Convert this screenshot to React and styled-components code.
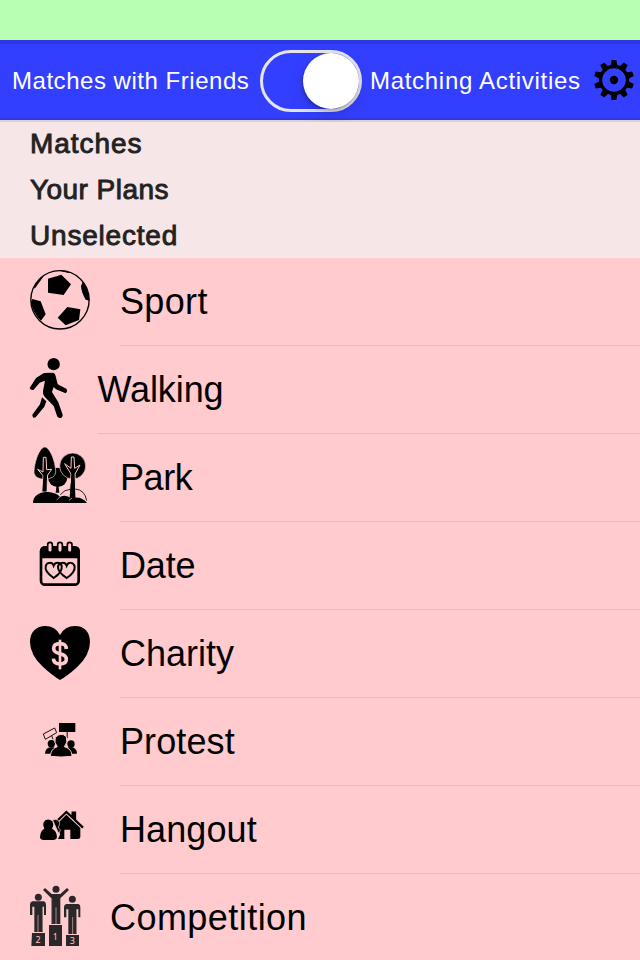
import React, { useState } from "react";
import styled, { createGlobalStyle } from "styled-components";

const GlobalStyle = createGlobalStyle`
  * { box-sizing: border-box; }
  body { margin: 0; background: #ffcbce; }
`;

const Screen = styled.main`
  width: 640px;
  height: 960px;
  overflow: hidden;
  display: flex;
  flex-direction: column;
  background: #ffcbce;
  color: #000;
  font-family: "Liberation Sans", Arial, sans-serif;
`;

const StatusBar = styled.div`
  flex: none;
  height: 40px;
  background: #b9ffb3;
`;

const Toolbar = styled.header`
  flex: none;
  height: 82px;
  display: flex;
  align-items: flex-start;
  padding: 6px 6px 0 12px;
  background: #333fff;
  border-top: 4px solid #2d38e4;
  border-bottom: 2px solid #dccfd1;
  box-shadow: inset 0 -2px #2d38e4;
`;

const ToolbarLabel = styled.span`
  flex: none;
  width: ${(p) => p.$width}px;
  line-height: 61px;
  font-size: 24px;
  letter-spacing: ${(p) => p.$spacing}px;
  color: #fff;
  white-space: nowrap;
`;

const Toggle = styled.button`
  flex: none;
  width: 102px;
  height: 62px;
  margin-right: 8px;
  padding: 0;
  display: flex;
  justify-content: ${(p) => (p.$on ? "flex-end" : "flex-start")};
  align-items: center;
  border: 3px solid #e5e5e8;
  border-radius: 31px;
  background: transparent;
`;

const Knob = styled.span`
  width: 56px;
  height: 56px;
  border-radius: 50%;
  background: #fff;
  box-shadow: -1px 2px 3px rgba(0, 0, 0, 0.2), 0 6px 16px rgba(0, 0, 0, 0.14);
`;

const SettingsButton = styled.button`
  flex: none;
  width: 40px;
  height: 40px;
  margin: 10px 0 0 auto;
  padding: 0;
  border: 0;
  background: none;
  svg { display: block; }
`;

const Sections = styled.section`
  flex: none;
  height: 136px;
  padding-left: 30px;
  background: #f6e6e7;
`;

const SectionTitle = styled.h2`
  margin: 0;
  height: 46px;
  line-height: 44px;
  font-size: 28px;
  font-weight: 400;
  letter-spacing: ${(p) => p.$spacing}px;
  color: #222;
  -webkit-text-stroke: 0.9px #222;
`;

const ActivityList = styled.ul`
  list-style: none;
  margin: 0;
  padding: 0;
`;

const ActivityRow = styled.li`
  height: 88px;
  display: flex;
  gap: 30px;
  padding-left: 30px;
`;

const ActivityIcon = styled.svg`
  flex: none;
  display: block;
  height: 60px;
  margin-top: 12px;
  overflow: visible;
`;

const ActivityName = styled.span`
  flex: 1;
  height: 88px;
  line-height: 87px;
  font-size: 36px;
  letter-spacing: ${(p) => p.$spacing}px;
  border-bottom: 1px solid #e0bdc3;
`;

const PINK = "#ffcbce";

function GearIcon() {
  const angles = [0, 36, 72, 108, 144, 180, 216, 252, 288, 324];
  return (
    <svg width="40" height="40" viewBox="-20 -20 40 40">
      <circle r="13.5" fill="none" stroke="#000" strokeWidth="3.4" />
      <circle r="4.2" />
      {angles.map((a) => (
        <path key={a} d="M-3.4-13.5-2.4-20H2.4L3.4-13.5Z" transform={`rotate(${a})`} />
      ))}
    </svg>
  );
}

const SportArt = () => (
  <>
    <circle cx="120" cy="113.500" r="87.500" fill="none" stroke="#000" strokeWidth="4" />
    <path d="M84 50 124 38 153 67 131 99 84 92Z" />
    <path d="M142 135 181 142 177 174 137 190 113 167Z" />
    <path d="M37 111 62 118 77 157 63 176Q38 154 33 120Z" />
    <path d="M188 60Q207 83 208 116L197 113Q184 91 183 72Z" />
    <path d="M43 76Q51 51 73 38L65 51 44 80Z" />
    <path d="M112 25Q140 24 158 34L142 32Z" />
  </>
);

const WalkArt = () => (
  <>
    <circle cx="101" cy="42.500" r="18.500" />
    <path d="M72 69 97 68Q106 69 107 79L113 103 139 116Q144 123 137 130L108 118 101 111 96 126 115 157 128 194Q128 205 118 204L112 200 101 168 74 140Q67 133 69 122L75 92 59 98 41 119Q33 123 29 114L48 84Z" />
    <path d="M66 142 79 154 73 170 47 202Q38 207 37 194L60 163Z" />
  </>
);

const ParkArt = () => (
  <>
    <circle cx="113" cy="118" r="29" />
    <path d="M110 139 107 164H118L115 139Z" />
    <path d="M74 27C60 27 42 70 42 105Q46 123 74 124Q103 122 107 105C107 67 88 27 74 27Z" stroke={PINK} strokeWidth="2" />
    <circle cx="158" cy="84" r="39" stroke={PINK} strokeWidth="2" />
    <path d="M70 58H78L80 95 95 94 83 111 80 162H67L69 113 53 94 69 102Z" stroke={PINK} strokeWidth="3" />
    <path d="M154 57H162L164 91 180 81 165 108 168 183H147L153 108 134 77 153 91Z" stroke={PINK} strokeWidth="3" />
    <path d="M71 110H78L80 160H67ZM155 100H162L165 180H150Z" />
    <path d="M121 170Q134 154 151 154M166 153Q195 156 200 188" fill="none" stroke="#000" strokeWidth="2.500" />
    <path d="M39 195C39 174 57 162 79 162C101 162 114 169 120 177Q138 168 153 181Q184 172 201 195Z" />
    <path d="M110 186 121 176M147 187 156 180" stroke={PINK} strokeWidth="2" />
  </>
);

const DateArt = () => (
  <>
    <rect x="63" y="64" width="113" height="112" rx="12" fill="none" stroke="#000" strokeWidth="8" />
    <path d="M60 97V76Q61 61 75 61H164Q179 61 179 76V97Z" />
    {[90, 120, 149].map((x) => (
      <rect key={x} x={x - 7} y="49" width="14" height="30" rx="7" fill={PINK} stroke="#000" strokeWidth="5" />
    ))}
    <path d="M101 156Q73 137 77 121C80 107 97 108 101 119C106 107 120 108 125 119Q128 139 101 156Z" fill="none" stroke="#000" strokeWidth="6" />
    <path d="M140 156Q112 137 114 121C118 107 136 108 140 119C145 107 160 108 164 121Q166 139 140 156Z" fill="none" stroke="#000" strokeWidth="6" />
  </>
);

const HeartArt = () => (
  <>
    <path d="M120 198Q100 187 70 160Q30 123 30 84C30 54 49 36 76 36Q106 36 120 63Q134 36 165 36C193 36 210 54 210 84Q210 123 171 160Q140 188 120 198Z" />
    <path d="M139 105C138 91 131 89 120 89C107 89 101 94 101 103C101 113 107 116 120 119C134 122 139 127 139 136C139 146 132 150 120 150C107 150 101 145 100 134" fill="none" stroke={PINK} strokeWidth="11" />
    <path d="M120 77V166" stroke={PINK} strokeWidth="8" />
  </>
);

const ProtestArt = () => (
  <g transform="translate(30 24)">
    <path d="M87 39H136V66H113V85H110V66H87Z" />
    <path d="M40 72 74 54 80 68 46 88ZM65 77 69 88" fill="none" stroke="#000" strokeWidth="2.800" />
    <circle cx="64" cy="101" r="11" />
    <circle cx="123" cy="102" r="11" />
    <path d="M45 131Q46 115 60 112H73L67 131ZM114 112H129Q141 118 141 131H119Z" />
    <path d="M61 139C63 121 70 115 82 110Q71 98 76 82Q93 65 109 80Q115 97 103 110C119 115 125 123 126 139Q93 143 61 139Z" stroke={PINK} strokeWidth="3" />
  </g>
);

const HangoutArt = () => (
  <g transform="translate(30 15)">
    <path d="M84 75 109 51 128 68V53H135V75L159 98" fill="none" stroke="#000" strokeWidth="7" />
    <path d="M84 84 109 59 151 99V126Q151 132 143 132H121V104H103V132H84L90 119Z" />
    <path d="M68 75Q84 70 89 83Q87 95 85 98Q97 107 85 113Z" stroke={PINK} strokeWidth="2" />
    <path d="M43 101Q35 85 46 76Q57 70 67 79Q73 91 66 101Q80 107 81 126Q80 134 70 135H41Q30 134 30 127Q31 106 43 101Z" />
  </g>
);

const PodiumArt = () => (
  <g transform="translate(0 -6)" fill="#292728">
    <circle cx="55" cy="64" r="10.500" />
    <circle cx="108" cy="40" r="10.500" />
    <circle cx="157" cy="70" r="10.500" />
    <path d="M37 76H72Q78 78 78 86V117H72V92H68V168H43V92H37V117H30V86Q30 78 37 76Z" />
    <path d="M95 54H121L141 36 147 42 121 67V144H94V67L69 42 75 36Z" />
    <path d="M139 84H175Q181 86 181 93V124H175V100H170V174H145V100H139V124H132V93Q132 86 139 84Z" />
    <path d="M54 117V168M108 94V144M158 123V174" stroke={PINK} strokeWidth="3" opacity=".6" />
    <path d="M69 92V165M95 66V143M170 100V173" stroke={PINK} strokeWidth="2" opacity=".5" />
    <path d="M36 171H75V210H34ZM87 147H126V210H87ZM138 177H177V210H138Z" />
    <g fill={PINK} fontFamily="Noto Sans, sans-serif" fontSize="27" textAnchor="middle">
      <text x="54" y="201">2</text>
      <text x="106" y="192">1</text>
      <text x="157" y="205">3</text>
    </g>
  </g>
);

const ACTIVITIES = [
  { name: "Sport", art: SportArt, width: 60, spacing: 0.35 },
  { name: "Walking", art: WalkArt, width: 37.5, spacing: -0.1 },
  { name: "Park", art: ParkArt, width: 60, spacing: -0.4 },
  { name: "Date", art: DateArt, width: 60, spacing: -0.15 },
  { name: "Charity", art: HeartArt, width: 60, spacing: 0 },
  { name: "Protest", art: ProtestArt, width: 60, spacing: 0.1 },
  { name: "Hangout", art: HangoutArt, width: 60, spacing: 0.1 },
  { name: "Competition", art: PodiumArt, width: 50, spacing: 0.45 },
];

const SECTIONS = [
  { title: "Matches", spacing: 0.95 },
  { title: "Your Plans", spacing: 0.45 },
  { title: "Unselected", spacing: 0.8 },
];

export default function App() {
  const [activitiesOn, setActivitiesOn] = useState(true);
  return (
    <>
      <GlobalStyle />
      <Screen>
        <StatusBar />
        <Toolbar>
          <ToolbarLabel $width={248} $spacing={0.53}>Matches with Friends</ToolbarLabel>
          <Toggle
            $on={activitiesOn}
            role="switch"
            aria-checked={activitiesOn}
            aria-label="Matching Activities"
            onClick={() => setActivitiesOn(!activitiesOn)}
          >
            <Knob />
          </Toggle>
          <ToolbarLabel $width={212} $spacing={0.7}>Matching Activities</ToolbarLabel>
          <SettingsButton aria-label="Settings">
            <GearIcon />
          </SettingsButton>
        </Toolbar>
        <Sections>
          {SECTIONS.map(({ title, spacing }) => (
            <SectionTitle key={title} $spacing={spacing}>{title}</SectionTitle>
          ))}
        </Sections>
        <ActivityList>
          {ACTIVITIES.map(({ name, art: Art, width, spacing }) => (
            <ActivityRow key={name}>
              <ActivityIcon width={width} viewBox={`30 24 ${width * 3} 180`} aria-hidden="true">
                <Art />
              </ActivityIcon>
              <ActivityName $spacing={spacing}>{name}</ActivityName>
            </ActivityRow>
          ))}
        </ActivityList>
      </Screen>
    </>
  );
}
